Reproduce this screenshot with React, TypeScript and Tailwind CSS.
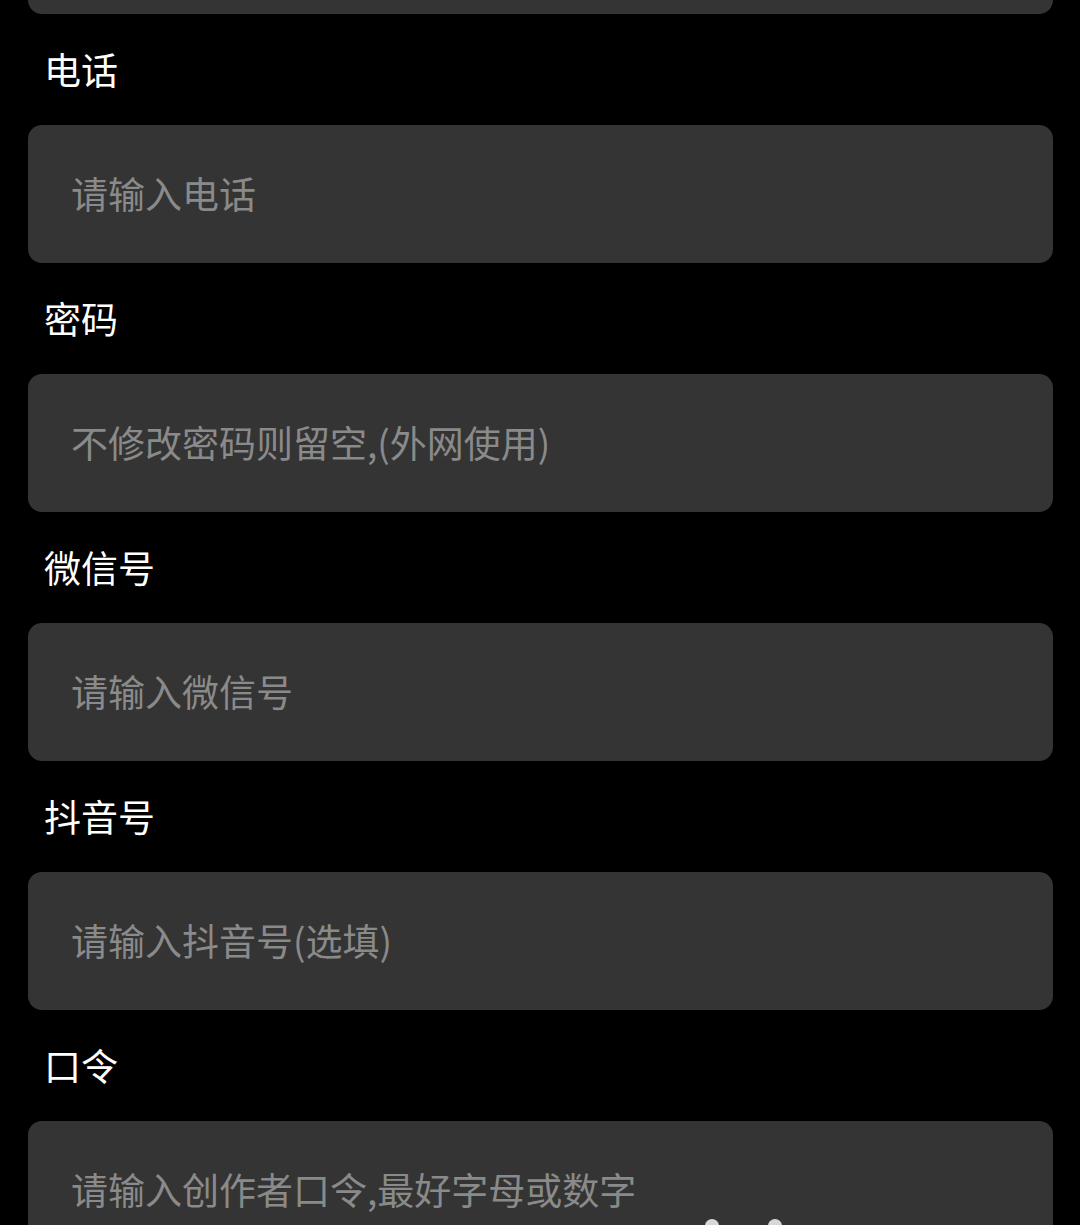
import React from "react";

const fields = [
    { label: "电话", placeholder: "请输入电话" },
    { label: "密码", placeholder: "不修改密码则留空,(外网使用)" },
    { label: "微信号", placeholder: "请输入微信号" },
    { label: "抖音号", placeholder: "请输入抖音号(选填)" },
    { label: "口令", placeholder: "请输入创作者口令,最好字母或数字" },
];

function Field({ label, placeholder, last }: { label: string; placeholder: string; last?: boolean }) {
    return (
        <>
            <div className="h-[111px] flex items-center pl-[16px] text-white text-[37px] leading-none">
                {label}
            </div>
            <div className="relative">
                <input
                    className="w-full h-[138px] rounded-[14px] bg-[#343434] pl-[43px] pb-[2px] text-[37px] text-white placeholder:text-[#8a8a8a] focus:outline-none"
                    type="text"
                    placeholder={placeholder}
                />
                {last && (
                    <>
                        <span className="absolute left-[677px] top-[98px] w-[14px] h-[14px] rounded-full bg-[#d8d8d8]" />
                        <span className="absolute left-[740px] top-[98px] w-[14px] h-[14px] rounded-full bg-[#d8d8d8]" />
                    </>
                )}
            </div>
        </>
    );
}

export default function App() {
    return (
        <div
            className="w-[1080px] h-[1225px] overflow-hidden bg-black"
            style={{ fontFamily: '"Noto Sans CJK SC", "Noto Sans", sans-serif' }}
        >
            <div className="-mt-[124px] ml-[28px] w-[1025px] flex flex-col">
                <div className="h-[138px] rounded-[14px] bg-[#343434]" />
                {fields.map((f, i) => (
                    <Field key={f.label} label={f.label} placeholder={f.placeholder} last={i === fields.length - 1} />
                ))}
            </div>
        </div>
    );
}
